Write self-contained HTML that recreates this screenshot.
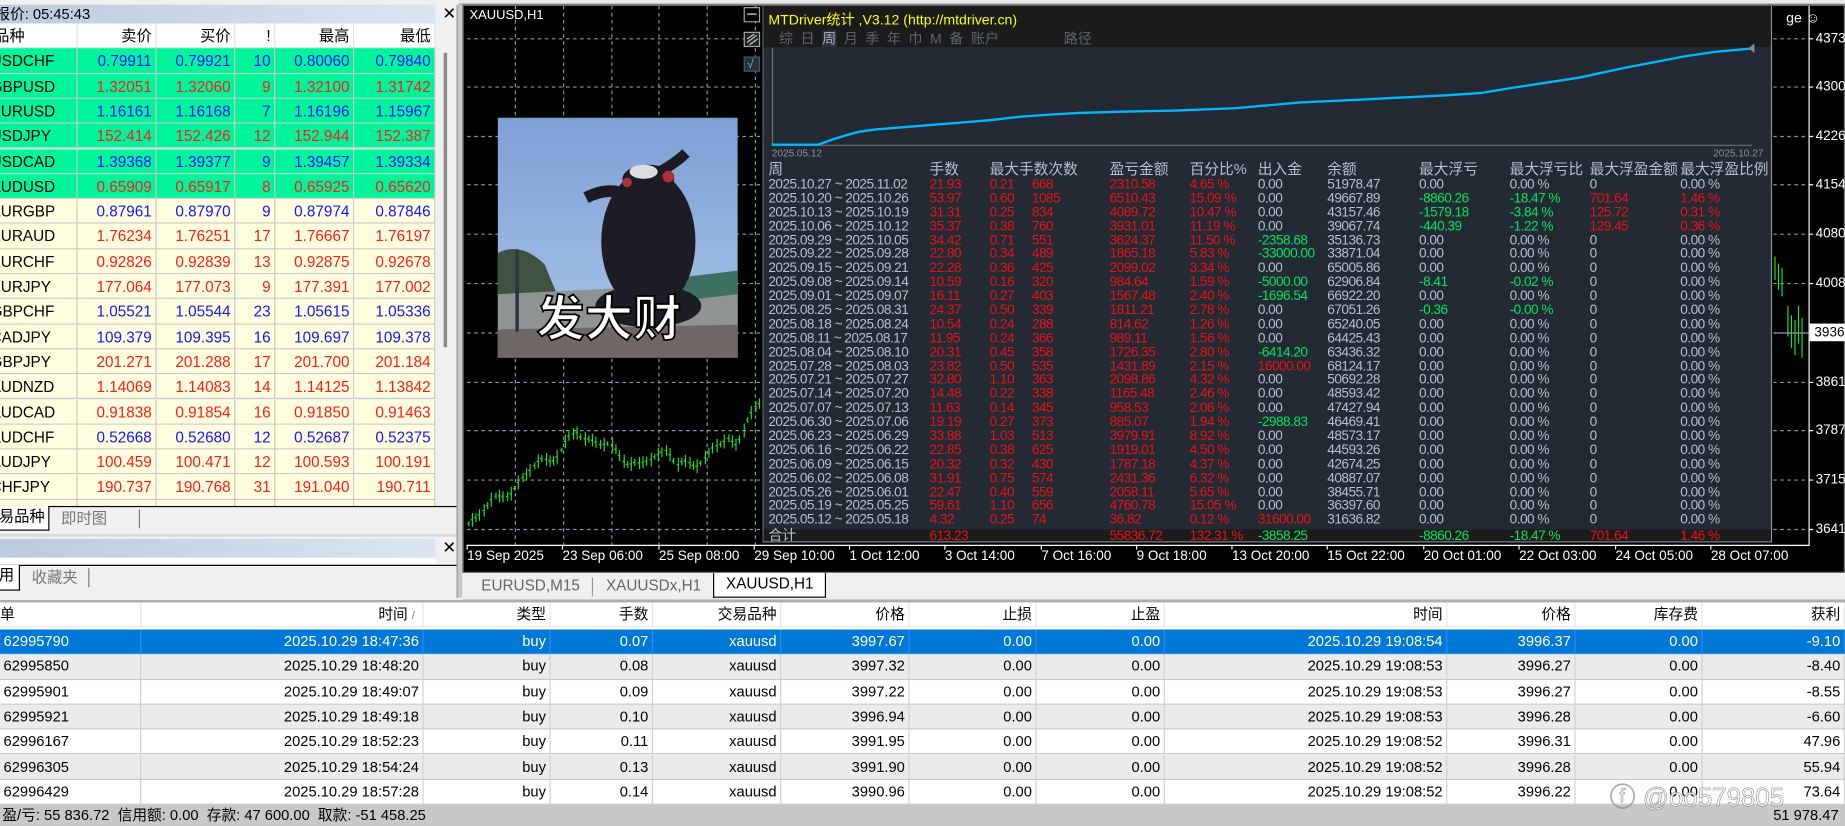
<!DOCTYPE html>
<html><head><meta charset="utf-8">
<style>
*{box-sizing:border-box;margin:0;padding:0}
html,body{width:1845px;height:826px;overflow:hidden;background:#f0f0f0}
#w{position:absolute;left:0;top:0;width:1568px;height:702px;transform:scale(1.176658,1.176638);transform-origin:0 0;background:#f0f0f0;font-family:"Liberation Sans","Noto Sans CJK SC",sans-serif;overflow:hidden}
.a{position:absolute;white-space:nowrap}
.lp{position:absolute;left:0;top:0;width:390px;height:510px;background:#f0f0f0;overflow:hidden}
.tb{position:absolute;left:0;height:16px;width:370px;background:linear-gradient(90deg,#bccbdd,#dbe5f1);font-size:12.5px;line-height:16px;color:#000}
.q{position:absolute;left:0;width:370px;height:21.3px;font-size:13px;line-height:21px}
.q div{position:absolute;top:0;height:21.3px;border-right:1px solid #c8c8c8;border-bottom:1px solid #c8c8c8;text-align:right;padding-right:3px}
.g{background:#00f59b}.c{background:#ffffe0}
.bl{color:#1414ff}.rd{color:#ff1a1a}
.sp{position:absolute;left:648px;top:5px;width:858px;height:456px;background:#232a33;border-left:1px solid #5a6470;border-right:1px solid #8892a0;border-bottom:1px solid #8892a0;overflow:hidden}
.st{font-size:11.6px;color:#b4bfcf;letter-spacing:-0.45px}
.r{color:#e8131a}.gr{color:#00e35f}
.bt{position:absolute;left:0;top:512px;width:1568px;font-size:12.5px}
.br{position:absolute;left:0;width:1568px;height:21.3px;line-height:21px}
.br div{position:absolute;top:0;height:21.3px;text-align:right;padding-right:3px;border-right:1px solid #d0d0d0;border-bottom:1px solid #c8c8c8}
.br div:first-child{text-align:left;padding-left:3px}
</style></head><body><div id="w">

<div class="a" style="left:0;top:0;width:1568px;height:4px;background:#e8e8e8;border-bottom:1px solid #999"></div>

<div class="lp">
 <div class="tb" style="top:4px"><span style="position:relative;left:-4px">报价: 05:45:43</span></div>
 <div class="a" style="left:376px;top:3px;font-size:14px;">✕</div>
 <div class="q" style="top:20px;background:#fff;font-size:13px">
  <div style="left:-5px;width:71px;text-align:left;border-color:#e0e0e0">品种</div>
  <div style="left:66px;width:67px;border-color:#e0e0e0">卖价</div>
  <div style="left:133px;width:67px;border-color:#e0e0e0">买价</div>
  <div style="left:200px;width:34px;border-color:#e0e0e0">!</div>
  <div style="left:234px;width:67px;border-color:#e0e0e0">最高</div>
  <div style="left:301px;width:69px;border-color:#e0e0e0">最低</div>
 </div>
 <div class="q g bl" style="top:41.3px"><div style="left:-8px;width:74px;text-align:left;color:#000">USDCHF</div><div style="left:66px;width:67px">0.79911</div><div style="left:133px;width:67px">0.79921</div><div style="left:200px;width:34px">10</div><div style="left:234px;width:67px">0.80060</div><div style="left:301px;width:69px">0.79840</div></div>
 <div class="q g rd" style="top:62.6px"><div style="left:-8px;width:74px;text-align:left;color:#000">GBPUSD</div><div style="left:66px;width:67px">1.32051</div><div style="left:133px;width:67px">1.32060</div><div style="left:200px;width:34px">9</div><div style="left:234px;width:67px">1.32100</div><div style="left:301px;width:69px">1.31742</div></div>
 <div class="q g bl" style="top:83.9px"><div style="left:-8px;width:74px;text-align:left;color:#000">EURUSD</div><div style="left:66px;width:67px">1.16161</div><div style="left:133px;width:67px">1.16168</div><div style="left:200px;width:34px">7</div><div style="left:234px;width:67px">1.16196</div><div style="left:301px;width:69px">1.15967</div></div>
 <div class="q g rd" style="top:105.2px"><div style="left:-8px;width:74px;text-align:left;color:#000">USDJPY</div><div style="left:66px;width:67px">152.414</div><div style="left:133px;width:67px">152.426</div><div style="left:200px;width:34px">12</div><div style="left:234px;width:67px">152.944</div><div style="left:301px;width:69px">152.387</div></div>
 <div class="q g bl" style="top:126.5px"><div style="left:-8px;width:74px;text-align:left;color:#000">USDCAD</div><div style="left:66px;width:67px">1.39368</div><div style="left:133px;width:67px">1.39377</div><div style="left:200px;width:34px">9</div><div style="left:234px;width:67px">1.39457</div><div style="left:301px;width:69px">1.39334</div></div>
 <div class="q g rd" style="top:147.8px"><div style="left:-8px;width:74px;text-align:left;color:#000">AUDUSD</div><div style="left:66px;width:67px">0.65909</div><div style="left:133px;width:67px">0.65917</div><div style="left:200px;width:34px">8</div><div style="left:234px;width:67px">0.65925</div><div style="left:301px;width:69px">0.65620</div></div>
 <div class="q c bl" style="top:169.1px"><div style="left:-8px;width:74px;text-align:left;color:#000">EURGBP</div><div style="left:66px;width:67px">0.87961</div><div style="left:133px;width:67px">0.87970</div><div style="left:200px;width:34px">9</div><div style="left:234px;width:67px">0.87974</div><div style="left:301px;width:69px">0.87846</div></div>
 <div class="q c rd" style="top:190.4px"><div style="left:-8px;width:74px;text-align:left;color:#000">EURAUD</div><div style="left:66px;width:67px">1.76234</div><div style="left:133px;width:67px">1.76251</div><div style="left:200px;width:34px">17</div><div style="left:234px;width:67px">1.76667</div><div style="left:301px;width:69px">1.76197</div></div>
 <div class="q c rd" style="top:211.7px"><div style="left:-8px;width:74px;text-align:left;color:#000">EURCHF</div><div style="left:66px;width:67px">0.92826</div><div style="left:133px;width:67px">0.92839</div><div style="left:200px;width:34px">13</div><div style="left:234px;width:67px">0.92875</div><div style="left:301px;width:69px">0.92678</div></div>
 <div class="q c rd" style="top:233px"><div style="left:-8px;width:74px;text-align:left;color:#000">EURJPY</div><div style="left:66px;width:67px">177.064</div><div style="left:133px;width:67px">177.073</div><div style="left:200px;width:34px">9</div><div style="left:234px;width:67px">177.391</div><div style="left:301px;width:69px">177.002</div></div>
 <div class="q c bl" style="top:254.3px"><div style="left:-8px;width:74px;text-align:left;color:#000">GBPCHF</div><div style="left:66px;width:67px">1.05521</div><div style="left:133px;width:67px">1.05544</div><div style="left:200px;width:34px">23</div><div style="left:234px;width:67px">1.05615</div><div style="left:301px;width:69px">1.05336</div></div>
 <div class="q c bl" style="top:275.6px"><div style="left:-8px;width:74px;text-align:left;color:#000">CADJPY</div><div style="left:66px;width:67px">109.379</div><div style="left:133px;width:67px">109.395</div><div style="left:200px;width:34px">16</div><div style="left:234px;width:67px">109.697</div><div style="left:301px;width:69px">109.378</div></div>
 <div class="q c rd" style="top:296.9px"><div style="left:-8px;width:74px;text-align:left;color:#000">GBPJPY</div><div style="left:66px;width:67px">201.271</div><div style="left:133px;width:67px">201.288</div><div style="left:200px;width:34px">17</div><div style="left:234px;width:67px">201.700</div><div style="left:301px;width:69px">201.184</div></div>
 <div class="q c rd" style="top:318.2px"><div style="left:-8px;width:74px;text-align:left;color:#000">AUDNZD</div><div style="left:66px;width:67px">1.14069</div><div style="left:133px;width:67px">1.14083</div><div style="left:200px;width:34px">14</div><div style="left:234px;width:67px">1.14125</div><div style="left:301px;width:69px">1.13842</div></div>
 <div class="q c rd" style="top:339.5px"><div style="left:-8px;width:74px;text-align:left;color:#000">AUDCAD</div><div style="left:66px;width:67px">0.91838</div><div style="left:133px;width:67px">0.91854</div><div style="left:200px;width:34px">16</div><div style="left:234px;width:67px">0.91850</div><div style="left:301px;width:69px">0.91463</div></div>
 <div class="q c bl" style="top:360.8px"><div style="left:-8px;width:74px;text-align:left;color:#000">AUDCHF</div><div style="left:66px;width:67px">0.52668</div><div style="left:133px;width:67px">0.52680</div><div style="left:200px;width:34px">12</div><div style="left:234px;width:67px">0.52687</div><div style="left:301px;width:69px">0.52375</div></div>
 <div class="q c rd" style="top:382.1px"><div style="left:-8px;width:74px;text-align:left;color:#000">AUDJPY</div><div style="left:66px;width:67px">100.459</div><div style="left:133px;width:67px">100.471</div><div style="left:200px;width:34px">12</div><div style="left:234px;width:67px">100.593</div><div style="left:301px;width:69px">100.191</div></div>
 <div class="q c rd" style="top:403.4px"><div style="left:-8px;width:74px;text-align:left;color:#000">CHFJPY</div><div style="left:66px;width:67px">190.737</div><div style="left:133px;width:67px">190.768</div><div style="left:200px;width:34px">31</div><div style="left:234px;width:67px">191.040</div><div style="left:301px;width:69px">190.711</div></div>
 <div class="q c rd" style="top:424.7px"><div style="left:-8px;width:74px;text-align:left;color:#000">NZDUSD</div><div style="left:66px;width:67px">0.57001</div><div style="left:133px;width:67px">0.57008</div><div style="left:200px;width:34px">7</div><div style="left:234px;width:67px">0.57117</div><div style="left:301px;width:69px">0.56875</div></div>
 <div class="a" style="left:370px;top:20px;width:18px;height:410px;background:#f0f0f0"></div>
 <div class="a" style="left:377px;top:45px;width:3px;height:250px;background:#888"></div>
 <div class="a" style="left:0;top:430px;width:390px;height:24px;background:#f0f0f0;border-top:1px solid #000"></div>
 <div class="a" style="left:-2px;top:430px;width:44px;height:21px;background:#fff;border:1px solid #000;border-top:none;font-size:13px;line-height:18px;padding-left:0">易品种</div>
 <div class="a" style="left:52px;top:432px;font-size:13px;color:#777;line-height:18px">即时图</div>
 <div class="a" style="left:118px;top:433px;width:1px;height:16px;background:#777"></div>
 <div class="a" style="left:0;top:454px;width:390px;height:2px;background:#d8d8d8"></div>
 <div class="tb" style="top:458px;height:16px"></div>
 <div class="a" style="left:376px;top:457px;font-size:14px;">✕</div>
 <div class="a" style="left:0;top:474px;width:370px;height:5px;background:#fff"></div>
 <div class="a" style="left:0;top:480px;width:390px;height:1px;background:#000"></div>
 <div class="a" style="left:-2px;top:480px;width:19px;height:22px;background:#fff;border:1px solid #000;border-top:none;font-size:13px;line-height:18px">用</div>
 <div class="a" style="left:27px;top:482px;font-size:13px;color:#777;line-height:18px">收藏夹</div>
 <div class="a" style="left:75px;top:483px;width:1px;height:16px;background:#777"></div>
</div>
<div class="a" style="left:388px;top:4px;width:5px;height:504px;background:#c8c8c8;border-left:1px solid #999"></div>

<div class="a" style="left:393px;top:4px;width:1175px;height:483px;background:#000;border:1px solid #777"></div>
<svg class="a" style="left:393px;top:4px" width="1175" height="483" viewBox="393 4 1175 483">
 <g stroke="#8b95a5" stroke-width="1" stroke-dasharray="3,3" fill="none">
  <path d="M397 33H1537M397 74H1537M397 116H1537M397 157H1537M397 199H1537M397 241H1537M397 283H1537M397 325H1537M397 366H1537M397 408H1537M397 450H1537"/>
  <path d="M438 5V463M479 5V463M520 5V463M560 5V463M601 5V463M642 5V463"/>
 </g>
 <path d="M397 463.5H1537.5V5" stroke="#fff" fill="none"/>
 <g stroke="#fff"><path d="M397 463v4M478 463v4M560 463v4M641 463v4M722 463v4M803 463v4M885 463v4M966 463v4M1047 463v4M1128 463v4M1210 463v4M1291 463v4M1373 463v4M1454 463v4M1537 33h4M1537 74h4M1537 116h4M1537 157h4M1537 199h4M1537 241h4M1537 325h4M1537 366h4M1537 408h4M1537 450h4"/></g>
 <g id="cand" stroke="#22e02a" stroke-width="1"></g>
 <rect x="1538" y="275" width="30" height="15" fill="#fff"/>
 <path d="M1508 283H1537" stroke="#8b95a5"/>
 <rect x="632.5" y="6.5" width="13" height="12" fill="#000" stroke="#9aa"/><path d="M635 12h8" stroke="#ddd"/>
 <rect x="632.5" y="27.5" width="13" height="12" fill="#222" stroke="#9aa"/><path d="M635 36l8-6M635 33l6-4M637 38l7-5" stroke="#ccc"/>
 <rect x="632.5" y="48.5" width="13" height="12" fill="#2a3038" stroke="#556"/><text x="635" y="58" font-size="10" fill="#4cf" font-family="Liberation Sans">√</text>
</svg>
<div class="a" style="left:399px;top:7px;font-size:11px;color:#fff">XAUUSD,H1</div>
<div class="a" style="left:1518px;top:8px;font-size:12px;color:#fff">ge ☺</div>
<div class="a" style="left:1543px;top:26px;font-size:11.5px;color:#fff;line-height:14px">4373</div>
<div class="a" style="left:1543px;top:67px;font-size:11.5px;color:#fff;line-height:14px">4300</div>
<div class="a" style="left:1543px;top:109px;font-size:11.5px;color:#fff;line-height:14px">4226</div>
<div class="a" style="left:1543px;top:150px;font-size:11.5px;color:#fff;line-height:14px">4154</div>
<div class="a" style="left:1543px;top:192px;font-size:11.5px;color:#fff;line-height:14px">4080</div>
<div class="a" style="left:1543px;top:234px;font-size:11.5px;color:#fff;line-height:14px">4008</div>
<div class="a" style="left:1542px;top:276px;font-size:11.5px;color:#000;line-height:14px">3936</div>
<div class="a" style="left:1543px;top:318px;font-size:11.5px;color:#fff;line-height:14px">3861</div>
<div class="a" style="left:1543px;top:359px;font-size:11.5px;color:#fff;line-height:14px">3787</div>
<div class="a" style="left:1543px;top:401px;font-size:11.5px;color:#fff;line-height:14px">3715</div>
<div class="a" style="left:1543px;top:443px;font-size:11.5px;color:#fff;line-height:14px">3641</div>
<div class="a" style="left:397px;top:467px;font-size:11.5px;color:#fff">19 Sep 2025</div>
<div class="a" style="left:478px;top:467px;font-size:11.5px;color:#fff">23 Sep 06:00</div>
<div class="a" style="left:560px;top:467px;font-size:11.5px;color:#fff">25 Sep 08:00</div>
<div class="a" style="left:641px;top:467px;font-size:11.5px;color:#fff">29 Sep 10:00</div>
<div class="a" style="left:722px;top:467px;font-size:11.5px;color:#fff">1 Oct 12:00</div>
<div class="a" style="left:803px;top:467px;font-size:11.5px;color:#fff">3 Oct 14:00</div>
<div class="a" style="left:885px;top:467px;font-size:11.5px;color:#fff">7 Oct 16:00</div>
<div class="a" style="left:966px;top:467px;font-size:11.5px;color:#fff">9 Oct 18:00</div>
<div class="a" style="left:1047px;top:467px;font-size:11.5px;color:#fff">13 Oct 20:00</div>
<div class="a" style="left:1128px;top:467px;font-size:11.5px;color:#fff">15 Oct 22:00</div>
<div class="a" style="left:1210px;top:467px;font-size:11.5px;color:#fff">20 Oct 01:00</div>
<div class="a" style="left:1291px;top:467px;font-size:11.5px;color:#fff">22 Oct 03:00</div>
<div class="a" style="left:1373px;top:467px;font-size:11.5px;color:#fff">24 Oct 05:00</div>
<div class="a" style="left:1454px;top:467px;font-size:11.5px;color:#fff">28 Oct 07:00</div>

<svg class="a" style="left:423px;top:100px" width="204" height="204" viewBox="0 0 204 204">
 <defs><linearGradient id="sky" x1="0" y1="0" x2="0" y2="1"><stop offset="0" stop-color="#7d9fd6"/><stop offset="1" stop-color="#a9c6e8"/></linearGradient></defs>
 <rect width="204" height="204" fill="url(#sky)"/>
 <path d="M0 115 Q20 105 40 125 Q50 150 55 160 L0 170Z" fill="#3e5340"/>
 <path d="M0 150 L204 140 L204 204 L0 204Z" fill="#8e9494"/>
 <path d="M120 140 L204 130 L204 150 L120 160Z" fill="#3d7060"/>
 <path d="M0 180 L204 176 L204 204 L0 204Z" fill="#6f6766"/>
 <rect x="15" y="112" width="3" height="70" fill="#334"/>
 <path d="M75 68 Q95 58 110 66" stroke="#1b1a22" stroke-width="10" fill="none"/>
 <path d="M130 50 Q150 40 160 30" stroke="#1b1a22" stroke-width="9" fill="none"/>
 <ellipse cx="128" cy="105" rx="40" ry="60" fill="#1d1b24"/>
 <ellipse cx="128" cy="160" rx="45" ry="18" fill="#1d1b24"/>
 <ellipse cx="128" cy="52" rx="22" ry="12" fill="#1d1b24"/>
 <ellipse cx="124" cy="46" rx="12" ry="6" fill="#ddd"/>
 <circle cx="145" cy="50" r="5" fill="#a33"/>
 <circle cx="110" cy="55" r="4" fill="#a33"/>
</svg>
<div class="a" style="left:456px;top:242px;font-family:'Noto Sans CJK SC',sans-serif;font-weight:bold;font-size:41px;color:#fff;line-height:50px;-webkit-text-stroke:1.5px #000">发大财</div>

<div class="sp">
 <div class="a" style="left:0;top:0;width:858px;height:35px;background:#1b1b1b"></div>
 <div class="a" style="left:4px;top:3px;font-size:12px;color:#ffff00">MTDriver统计 ,V3.12 (http://mtdriver.cn)</div>
 <div class="a" style="left:13px;top:19px;font-size:12px;color:#5c6470;word-spacing:3px">综 日 <span style="background:#2c333d;color:#aab">周</span> 月 季 年 巾 M 备 账户</div>
 <div class="a" style="left:255px;top:19px;font-size:12px;color:#5c6470">路径</div>
 <svg class="a" style="left:0;top:0" width="858" height="130">
  <path d="M7.5 36V118.5H840" stroke="#6a727c" fill="none"/>
  <polyline fill="none" stroke="#00b8ff" stroke-width="2" points="7,118 46,118 60,113 70,110 81,107 95,105 120,103 145,101 170,99 193,97 220,94 250,92 268,91 300,90 350,89 400,87 457,82 500,80 540,78 580,76 610,74 634,70 660,66 693,61 730,53 782,43 809,39 842,36"/>
  <path d="M842 32l-5 4l5 4z" fill="#889"/>
 </svg>
 <div class="a" style="left:7px;top:120px;font-size:8.5px;color:#8a929c">2025.05.12</div>
 <div class="a" style="left:807px;top:120px;font-size:8.5px;color:#8a929c">2025.10.27</div>
 <div class="a st" style="left:4px;top:132px;font-size:12.5px;width:860px;line-height:14px;letter-spacing:0">
  <span class="a" style="left:0">周</span><span class="a" style="left:137px">手数</span><span class="a" style="left:188px">最大手数次数</span><span class="a" style="left:290px">盈亏金额</span><span class="a" style="left:358px">百分比%</span><span class="a" style="left:416px">出入金</span><span class="a" style="left:475px">余额</span><span class="a" style="left:553px">最大浮亏</span><span class="a" style="left:630px">最大浮亏比</span><span class="a" style="left:698px">最大浮盈金额</span><span class="a" style="left:775px">最大浮盈比例</span>
 </div>
 <div class="a st" style="left:4px;top:146px;width:860px;line-height:11.9px">
<div style="position:relative;height:11.9px"><span class="a" style="left:0">2025.10.27 ~ 2025.11.02</span><span class="a r" style="left:137px">21.93</span><span class="a r" style="left:188px">0.21</span><span class="a r" style="left:224px">668</span><span class="a r" style="left:290px">2310.58</span><span class="a r" style="left:358px">4.65 %</span><span class="a" style="left:416px">0.00</span><span class="a" style="left:475px">51978.47</span><span class="a" style="left:553px">0.00</span><span class="a" style="left:630px">0.00 %</span><span class="a" style="left:698px">0</span><span class="a" style="left:775px">0.00 %</span></div>
<div style="position:relative;height:11.9px"><span class="a" style="left:0">2025.10.20 ~ 2025.10.26</span><span class="a r" style="left:137px">53.97</span><span class="a r" style="left:188px">0.60</span><span class="a r" style="left:224px">1085</span><span class="a r" style="left:290px">6510.43</span><span class="a r" style="left:358px">15.09 %</span><span class="a" style="left:416px">0.00</span><span class="a" style="left:475px">49667.89</span><span class="a gr" style="left:553px">-8860.26</span><span class="a gr" style="left:630px">-18.47 %</span><span class="a r" style="left:698px">701.64</span><span class="a r" style="left:775px">1.46 %</span></div>
<div style="position:relative;height:11.9px"><span class="a" style="left:0">2025.10.13 ~ 2025.10.19</span><span class="a r" style="left:137px">31.31</span><span class="a r" style="left:188px">0.25</span><span class="a r" style="left:224px">834</span><span class="a r" style="left:290px">4089.72</span><span class="a r" style="left:358px">10.47 %</span><span class="a" style="left:416px">0.00</span><span class="a" style="left:475px">43157.46</span><span class="a gr" style="left:553px">-1579.18</span><span class="a gr" style="left:630px">-3.84 %</span><span class="a r" style="left:698px">125.72</span><span class="a r" style="left:775px">0.31 %</span></div>
<div style="position:relative;height:11.9px"><span class="a" style="left:0">2025.10.06 ~ 2025.10.12</span><span class="a r" style="left:137px">35.37</span><span class="a r" style="left:188px">0.38</span><span class="a r" style="left:224px">760</span><span class="a r" style="left:290px">3931.01</span><span class="a r" style="left:358px">11.19 %</span><span class="a" style="left:416px">0.00</span><span class="a" style="left:475px">39067.74</span><span class="a gr" style="left:553px">-440.39</span><span class="a gr" style="left:630px">-1.22 %</span><span class="a r" style="left:698px">129.45</span><span class="a r" style="left:775px">0.36 %</span></div>
<div style="position:relative;height:11.9px"><span class="a" style="left:0">2025.09.29 ~ 2025.10.05</span><span class="a r" style="left:137px">34.42</span><span class="a r" style="left:188px">0.71</span><span class="a r" style="left:224px">551</span><span class="a r" style="left:290px">3624.37</span><span class="a r" style="left:358px">11.50 %</span><span class="a gr" style="left:416px">-2358.68</span><span class="a" style="left:475px">35136.73</span><span class="a" style="left:553px">0.00</span><span class="a" style="left:630px">0.00 %</span><span class="a" style="left:698px">0</span><span class="a" style="left:775px">0.00 %</span></div>
<div style="position:relative;height:11.9px"><span class="a" style="left:0">2025.09.22 ~ 2025.09.28</span><span class="a r" style="left:137px">22.80</span><span class="a r" style="left:188px">0.34</span><span class="a r" style="left:224px">489</span><span class="a r" style="left:290px">1865.18</span><span class="a r" style="left:358px">5.83 %</span><span class="a gr" style="left:416px">-33000.00</span><span class="a" style="left:475px">33871.04</span><span class="a" style="left:553px">0.00</span><span class="a" style="left:630px">0.00 %</span><span class="a" style="left:698px">0</span><span class="a" style="left:775px">0.00 %</span></div>
<div style="position:relative;height:11.9px"><span class="a" style="left:0">2025.09.15 ~ 2025.09.21</span><span class="a r" style="left:137px">22.28</span><span class="a r" style="left:188px">0.36</span><span class="a r" style="left:224px">425</span><span class="a r" style="left:290px">2099.02</span><span class="a r" style="left:358px">3.34 %</span><span class="a" style="left:416px">0.00</span><span class="a" style="left:475px">65005.86</span><span class="a" style="left:553px">0.00</span><span class="a" style="left:630px">0.00 %</span><span class="a" style="left:698px">0</span><span class="a" style="left:775px">0.00 %</span></div>
<div style="position:relative;height:11.9px"><span class="a" style="left:0">2025.09.08 ~ 2025.09.14</span><span class="a r" style="left:137px">10.59</span><span class="a r" style="left:188px">0.16</span><span class="a r" style="left:224px">320</span><span class="a r" style="left:290px">984.64</span><span class="a r" style="left:358px">1.59 %</span><span class="a gr" style="left:416px">-5000.00</span><span class="a" style="left:475px">62906.84</span><span class="a gr" style="left:553px">-8.41</span><span class="a gr" style="left:630px">-0.02 %</span><span class="a" style="left:698px">0</span><span class="a" style="left:775px">0.00 %</span></div>
<div style="position:relative;height:11.9px"><span class="a" style="left:0">2025.09.01 ~ 2025.09.07</span><span class="a r" style="left:137px">16.11</span><span class="a r" style="left:188px">0.27</span><span class="a r" style="left:224px">403</span><span class="a r" style="left:290px">1567.48</span><span class="a r" style="left:358px">2.40 %</span><span class="a gr" style="left:416px">-1696.54</span><span class="a" style="left:475px">66922.20</span><span class="a" style="left:553px">0.00</span><span class="a" style="left:630px">0.00 %</span><span class="a" style="left:698px">0</span><span class="a" style="left:775px">0.00 %</span></div>
<div style="position:relative;height:11.9px"><span class="a" style="left:0">2025.08.25 ~ 2025.08.31</span><span class="a r" style="left:137px">24.37</span><span class="a r" style="left:188px">0.50</span><span class="a r" style="left:224px">339</span><span class="a r" style="left:290px">1811.21</span><span class="a r" style="left:358px">2.78 %</span><span class="a" style="left:416px">0.00</span><span class="a" style="left:475px">67051.26</span><span class="a gr" style="left:553px">-0.36</span><span class="a gr" style="left:630px">-0.00 %</span><span class="a" style="left:698px">0</span><span class="a" style="left:775px">0.00 %</span></div>
<div style="position:relative;height:11.9px"><span class="a" style="left:0">2025.08.18 ~ 2025.08.24</span><span class="a r" style="left:137px">10.54</span><span class="a r" style="left:188px">0.24</span><span class="a r" style="left:224px">288</span><span class="a r" style="left:290px">814.62</span><span class="a r" style="left:358px">1.26 %</span><span class="a" style="left:416px">0.00</span><span class="a" style="left:475px">65240.05</span><span class="a" style="left:553px">0.00</span><span class="a" style="left:630px">0.00 %</span><span class="a" style="left:698px">0</span><span class="a" style="left:775px">0.00 %</span></div>
<div style="position:relative;height:11.9px"><span class="a" style="left:0">2025.08.11 ~ 2025.08.17</span><span class="a r" style="left:137px">11.95</span><span class="a r" style="left:188px">0.24</span><span class="a r" style="left:224px">366</span><span class="a r" style="left:290px">989.11</span><span class="a r" style="left:358px">1.56 %</span><span class="a" style="left:416px">0.00</span><span class="a" style="left:475px">64425.43</span><span class="a" style="left:553px">0.00</span><span class="a" style="left:630px">0.00 %</span><span class="a" style="left:698px">0</span><span class="a" style="left:775px">0.00 %</span></div>
<div style="position:relative;height:11.9px"><span class="a" style="left:0">2025.08.04 ~ 2025.08.10</span><span class="a r" style="left:137px">20.31</span><span class="a r" style="left:188px">0.45</span><span class="a r" style="left:224px">358</span><span class="a r" style="left:290px">1726.35</span><span class="a r" style="left:358px">2.80 %</span><span class="a gr" style="left:416px">-6414.20</span><span class="a" style="left:475px">63436.32</span><span class="a" style="left:553px">0.00</span><span class="a" style="left:630px">0.00 %</span><span class="a" style="left:698px">0</span><span class="a" style="left:775px">0.00 %</span></div>
<div style="position:relative;height:11.9px"><span class="a" style="left:0">2025.07.28 ~ 2025.08.03</span><span class="a r" style="left:137px">23.82</span><span class="a r" style="left:188px">0.50</span><span class="a r" style="left:224px">535</span><span class="a r" style="left:290px">1431.89</span><span class="a r" style="left:358px">2.15 %</span><span class="a r" style="left:416px">16000.00</span><span class="a" style="left:475px">68124.17</span><span class="a" style="left:553px">0.00</span><span class="a" style="left:630px">0.00 %</span><span class="a" style="left:698px">0</span><span class="a" style="left:775px">0.00 %</span></div>
<div style="position:relative;height:11.9px"><span class="a" style="left:0">2025.07.21 ~ 2025.07.27</span><span class="a r" style="left:137px">32.80</span><span class="a r" style="left:188px">1.10</span><span class="a r" style="left:224px">363</span><span class="a r" style="left:290px">2098.86</span><span class="a r" style="left:358px">4.32 %</span><span class="a" style="left:416px">0.00</span><span class="a" style="left:475px">50692.28</span><span class="a" style="left:553px">0.00</span><span class="a" style="left:630px">0.00 %</span><span class="a" style="left:698px">0</span><span class="a" style="left:775px">0.00 %</span></div>
<div style="position:relative;height:11.9px"><span class="a" style="left:0">2025.07.14 ~ 2025.07.20</span><span class="a r" style="left:137px">14.48</span><span class="a r" style="left:188px">0.22</span><span class="a r" style="left:224px">338</span><span class="a r" style="left:290px">1165.48</span><span class="a r" style="left:358px">2.46 %</span><span class="a" style="left:416px">0.00</span><span class="a" style="left:475px">48593.42</span><span class="a" style="left:553px">0.00</span><span class="a" style="left:630px">0.00 %</span><span class="a" style="left:698px">0</span><span class="a" style="left:775px">0.00 %</span></div>
<div style="position:relative;height:11.9px"><span class="a" style="left:0">2025.07.07 ~ 2025.07.13</span><span class="a r" style="left:137px">11.63</span><span class="a r" style="left:188px">0.14</span><span class="a r" style="left:224px">345</span><span class="a r" style="left:290px">958.53</span><span class="a r" style="left:358px">2.06 %</span><span class="a" style="left:416px">0.00</span><span class="a" style="left:475px">47427.94</span><span class="a" style="left:553px">0.00</span><span class="a" style="left:630px">0.00 %</span><span class="a" style="left:698px">0</span><span class="a" style="left:775px">0.00 %</span></div>
<div style="position:relative;height:11.9px"><span class="a" style="left:0">2025.06.30 ~ 2025.07.06</span><span class="a r" style="left:137px">19.19</span><span class="a r" style="left:188px">0.27</span><span class="a r" style="left:224px">373</span><span class="a r" style="left:290px">885.07</span><span class="a r" style="left:358px">1.94 %</span><span class="a gr" style="left:416px">-2988.83</span><span class="a" style="left:475px">46469.41</span><span class="a" style="left:553px">0.00</span><span class="a" style="left:630px">0.00 %</span><span class="a" style="left:698px">0</span><span class="a" style="left:775px">0.00 %</span></div>
<div style="position:relative;height:11.9px"><span class="a" style="left:0">2025.06.23 ~ 2025.06.29</span><span class="a r" style="left:137px">33.88</span><span class="a r" style="left:188px">1.03</span><span class="a r" style="left:224px">513</span><span class="a r" style="left:290px">3979.91</span><span class="a r" style="left:358px">8.92 %</span><span class="a" style="left:416px">0.00</span><span class="a" style="left:475px">48573.17</span><span class="a" style="left:553px">0.00</span><span class="a" style="left:630px">0.00 %</span><span class="a" style="left:698px">0</span><span class="a" style="left:775px">0.00 %</span></div>
<div style="position:relative;height:11.9px"><span class="a" style="left:0">2025.06.16 ~ 2025.06.22</span><span class="a r" style="left:137px">22.85</span><span class="a r" style="left:188px">0.38</span><span class="a r" style="left:224px">625</span><span class="a r" style="left:290px">1919.01</span><span class="a r" style="left:358px">4.50 %</span><span class="a" style="left:416px">0.00</span><span class="a" style="left:475px">44593.26</span><span class="a" style="left:553px">0.00</span><span class="a" style="left:630px">0.00 %</span><span class="a" style="left:698px">0</span><span class="a" style="left:775px">0.00 %</span></div>
<div style="position:relative;height:11.9px"><span class="a" style="left:0">2025.06.09 ~ 2025.06.15</span><span class="a r" style="left:137px">20.32</span><span class="a r" style="left:188px">0.32</span><span class="a r" style="left:224px">430</span><span class="a r" style="left:290px">1787.18</span><span class="a r" style="left:358px">4.37 %</span><span class="a" style="left:416px">0.00</span><span class="a" style="left:475px">42674.25</span><span class="a" style="left:553px">0.00</span><span class="a" style="left:630px">0.00 %</span><span class="a" style="left:698px">0</span><span class="a" style="left:775px">0.00 %</span></div>
<div style="position:relative;height:11.9px"><span class="a" style="left:0">2025.06.02 ~ 2025.06.08</span><span class="a r" style="left:137px">31.91</span><span class="a r" style="left:188px">0.75</span><span class="a r" style="left:224px">574</span><span class="a r" style="left:290px">2431.36</span><span class="a r" style="left:358px">6.32 %</span><span class="a" style="left:416px">0.00</span><span class="a" style="left:475px">40887.07</span><span class="a" style="left:553px">0.00</span><span class="a" style="left:630px">0.00 %</span><span class="a" style="left:698px">0</span><span class="a" style="left:775px">0.00 %</span></div>
<div style="position:relative;height:11.9px"><span class="a" style="left:0">2025.05.26 ~ 2025.06.01</span><span class="a r" style="left:137px">22.47</span><span class="a r" style="left:188px">0.40</span><span class="a r" style="left:224px">559</span><span class="a r" style="left:290px">2058.11</span><span class="a r" style="left:358px">5.65 %</span><span class="a" style="left:416px">0.00</span><span class="a" style="left:475px">38455.71</span><span class="a" style="left:553px">0.00</span><span class="a" style="left:630px">0.00 %</span><span class="a" style="left:698px">0</span><span class="a" style="left:775px">0.00 %</span></div>
<div style="position:relative;height:11.9px"><span class="a" style="left:0">2025.05.19 ~ 2025.05.25</span><span class="a r" style="left:137px">59.61</span><span class="a r" style="left:188px">1.10</span><span class="a r" style="left:224px">656</span><span class="a r" style="left:290px">4760.78</span><span class="a r" style="left:358px">15.05 %</span><span class="a" style="left:416px">0.00</span><span class="a" style="left:475px">36397.60</span><span class="a" style="left:553px">0.00</span><span class="a" style="left:630px">0.00 %</span><span class="a" style="left:698px">0</span><span class="a" style="left:775px">0.00 %</span></div>
<div style="position:relative;height:11.9px"><span class="a" style="left:0">2025.05.12 ~ 2025.05.18</span><span class="a r" style="left:137px">4.32</span><span class="a r" style="left:188px">0.25</span><span class="a r" style="left:224px">74</span><span class="a r" style="left:290px">36.82</span><span class="a r" style="left:358px">0.12 %</span><span class="a r" style="left:416px">31600.00</span><span class="a" style="left:475px">31636.82</span><span class="a" style="left:553px">0.00</span><span class="a" style="left:630px">0.00 %</span><span class="a" style="left:698px">0</span><span class="a" style="left:775px">0.00 %</span></div>
 </div>
 <div class="a" style="left:0;top:445px;width:858px;height:12px;background:#1b1b1b"></div>
 <div class="a st" style="left:4px;top:444px;width:860px;height:12px;line-height:13px">
  <span class="a" style="left:0;font-size:12px">合计</span><span class="a r" style="left:137px">613.23</span><span class="a r" style="left:290px">55836.72</span><span class="a r" style="left:358px">132.31 %</span><span class="a gr" style="left:416px">-3858.25</span><span class="a gr" style="left:553px">-8860.26</span><span class="a gr" style="left:630px">-18.47 %</span><span class="a r" style="left:698px">701.64</span><span class="a r" style="left:775px">1.46 %</span>
 </div>
</div>

<div class="a" style="left:393px;top:487px;width:1175px;height:23px;background:#f0f0f0;border-bottom:1px solid #d0d0d0"></div>
<div class="a" style="left:409px;top:490px;font-size:13px;color:#666;line-height:16px">EURUSD,M15</div>
<div class="a" style="left:503px;top:491px;width:1px;height:16px;background:#999"></div>
<div class="a" style="left:515px;top:490px;font-size:13px;color:#666;line-height:16px">XAUUSDx,H1</div>
<div class="a" style="left:606px;top:487px;width:96px;height:21px;background:#fff;border:1px solid #000;border-top:none;font-size:13px;color:#000;line-height:18px;padding-left:10px">XAUUSD,H1</div>

<div class="a" style="left:0;top:510px;width:1568px;height:2px;background:#aaa"></div>
<div class="bt">
 <div class="br" style="top:0;background:#fff;height:23px">
  <div style="left:0;width:120px;padding-left:0;border-color:#e6e6e6">单</div><div style="left:120px;width:240px;border-color:#e6e6e6">时间 <span style="font-size:9px;color:#777">/</span>&nbsp;</div><div style="left:360px;width:108px;border-color:#e6e6e6">类型</div><div style="left:468px;width:87px;border-color:#e6e6e6">手数</div><div style="left:555px;width:109px;border-color:#e6e6e6">交易品种</div><div style="left:664px;width:109px;border-color:#e6e6e6">价格</div><div style="left:773px;width:108px;border-color:#e6e6e6">止损</div><div style="left:881px;width:109px;border-color:#e6e6e6">止盈</div><div style="left:990px;width:240px;border-color:#e6e6e6">时间</div><div style="left:1230px;width:109px;border-color:#e6e6e6">价格</div><div style="left:1339px;width:108px;border-color:#e6e6e6">库存费</div><div style="left:1447px;width:121px;border-color:#e6e6e6">获利</div>
 </div>
 <div class="br" style="top:23px;background:#0078d7;color:#fff">
  <div style="left:0;width:120px;border-color:#2d8ee0">62995790</div><div style="left:120px;width:240px;border-color:#2d8ee0">2025.10.29 18:47:36</div><div style="left:360px;width:108px;border-color:#2d8ee0">buy</div><div style="left:468px;width:87px;border-color:#2d8ee0">0.07</div><div style="left:555px;width:109px;border-color:#2d8ee0">xauusd</div><div style="left:664px;width:109px;border-color:#2d8ee0">3997.67</div><div style="left:773px;width:108px;border-color:#2d8ee0">0.00</div><div style="left:881px;width:109px;border-color:#2d8ee0">0.00</div><div style="left:990px;width:240px;border-color:#2d8ee0">2025.10.29 19:08:54</div><div style="left:1230px;width:109px;border-color:#2d8ee0">3996.37</div><div style="left:1339px;width:108px;border-color:#2d8ee0">0.00</div><div style="left:1447px;width:121px;border-color:#2d8ee0">-9.10</div>
 </div>
 <div class="br" style="top:44.3px;background:#ebebeb">
  <div style="left:0;width:120px">62995850</div><div style="left:120px;width:240px">2025.10.29 18:48:20</div><div style="left:360px;width:108px">buy</div><div style="left:468px;width:87px">0.08</div><div style="left:555px;width:109px">xauusd</div><div style="left:664px;width:109px">3997.32</div><div style="left:773px;width:108px">0.00</div><div style="left:881px;width:109px">0.00</div><div style="left:990px;width:240px">2025.10.29 19:08:53</div><div style="left:1230px;width:109px">3996.27</div><div style="left:1339px;width:108px">0.00</div><div style="left:1447px;width:121px">-8.40</div>
 </div>
 <div class="br" style="top:65.6px;background:#fff">
  <div style="left:0;width:120px">62995901</div><div style="left:120px;width:240px">2025.10.29 18:49:07</div><div style="left:360px;width:108px">buy</div><div style="left:468px;width:87px">0.09</div><div style="left:555px;width:109px">xauusd</div><div style="left:664px;width:109px">3997.22</div><div style="left:773px;width:108px">0.00</div><div style="left:881px;width:109px">0.00</div><div style="left:990px;width:240px">2025.10.29 19:08:53</div><div style="left:1230px;width:109px">3996.27</div><div style="left:1339px;width:108px">0.00</div><div style="left:1447px;width:121px">-8.55</div>
 </div>
 <div class="br" style="top:86.9px;background:#ebebeb">
  <div style="left:0;width:120px">62995921</div><div style="left:120px;width:240px">2025.10.29 18:49:18</div><div style="left:360px;width:108px">buy</div><div style="left:468px;width:87px">0.10</div><div style="left:555px;width:109px">xauusd</div><div style="left:664px;width:109px">3996.94</div><div style="left:773px;width:108px">0.00</div><div style="left:881px;width:109px">0.00</div><div style="left:990px;width:240px">2025.10.29 19:08:53</div><div style="left:1230px;width:109px">3996.28</div><div style="left:1339px;width:108px">0.00</div><div style="left:1447px;width:121px">-6.60</div>
 </div>
 <div class="br" style="top:108.2px;background:#fff">
  <div style="left:0;width:120px">62996167</div><div style="left:120px;width:240px">2025.10.29 18:52:23</div><div style="left:360px;width:108px">buy</div><div style="left:468px;width:87px">0.11</div><div style="left:555px;width:109px">xauusd</div><div style="left:664px;width:109px">3991.95</div><div style="left:773px;width:108px">0.00</div><div style="left:881px;width:109px">0.00</div><div style="left:990px;width:240px">2025.10.29 19:08:52</div><div style="left:1230px;width:109px">3996.31</div><div style="left:1339px;width:108px">0.00</div><div style="left:1447px;width:121px">47.96</div>
 </div>
 <div class="br" style="top:129.5px;background:#ebebeb">
  <div style="left:0;width:120px">62996305</div><div style="left:120px;width:240px">2025.10.29 18:54:24</div><div style="left:360px;width:108px">buy</div><div style="left:468px;width:87px">0.13</div><div style="left:555px;width:109px">xauusd</div><div style="left:664px;width:109px">3991.90</div><div style="left:773px;width:108px">0.00</div><div style="left:881px;width:109px">0.00</div><div style="left:990px;width:240px">2025.10.29 19:08:52</div><div style="left:1230px;width:109px">3996.28</div><div style="left:1339px;width:108px">0.00</div><div style="left:1447px;width:121px">55.94</div>
 </div>
 <div class="br" style="top:150.8px;background:#fff">
  <div style="left:0;width:120px">62996429</div><div style="left:120px;width:240px">2025.10.29 18:57:28</div><div style="left:360px;width:108px">buy</div><div style="left:468px;width:87px">0.14</div><div style="left:555px;width:109px">xauusd</div><div style="left:664px;width:109px">3990.96</div><div style="left:773px;width:108px">0.00</div><div style="left:881px;width:109px">0.00</div><div style="left:990px;width:240px">2025.10.29 19:08:52</div><div style="left:1230px;width:109px">3996.22</div><div style="left:1339px;width:108px">0.00</div><div style="left:1447px;width:121px">73.64</div>
 </div>
</div>
<div class="a" style="left:0;top:684px;width:1568px;height:18px;background:#c8c8c8;font-size:12.5px;line-height:18px;padding-left:2px">盈/亏: 55 836.72&nbsp; 信用额: 0.00&nbsp; 存款: 47 600.00&nbsp; 取款: -51 458.25</div>
<div class="a" style="left:1507px;top:684px;font-size:12.5px;line-height:18px">51 978.47</div>
<div class="a" style="left:1368px;top:660px;font-size:22px;color:rgba(255,255,255,.85);-webkit-text-stroke:0.6px rgba(90,90,90,.6)">ⓕ @oo579805</div>

<script>
(function(){
var pts=[[397,448],[410,430],[425,425],[440,410],[445,405],[460,392],[476,384],[490,367],[500,372],[510,378],[518,380],[530,388],[544,399],[555,386],[567,382],[575,397],[590,392],[603,388],[618,370],[626,378],[635,358],[645,345]];
var g=document.getElementById('cand'),s='';
for(var x=397.5;x<648;x+=3.3){var i=0;while(i<pts.length-2&&pts[i+1][0]<x)i++;var a=pts[i],b=pts[i+1];var t=(x-a[0])/(b[0]-a[0]);var y=a[1]+(b[1]-a[1])*Math.max(0,Math.min(1,t));var n=Math.sin(x*1.7)*3+Math.sin(x*.31)*2;var h=4+Math.abs(Math.sin(x*2.3))*8;var xx=Math.round(x)+0.5;s+='M'+xx+' '+(y+n-h/2).toFixed(1)+'v'+h.toFixed(1)+'M'+(xx-1.5)+' '+(y+n).toFixed(1)+'h1.5';}
var r=[[1508.5,228],[1511.5,234],[1514.5,238],[1519.5,270],[1522.5,278],[1525.5,282],[1528.5,270],[1531.5,280]];
for(var k=0;k<r.length;k++){s+='M'+r[k][0]+' '+(r[k][1]-10)+'v'+(20+k*2);}
var p=document.createElementNS('http://www.w3.org/2000/svg','path');p.setAttribute('d',s);g.appendChild(p);
})();
</script>
</div></body></html>
